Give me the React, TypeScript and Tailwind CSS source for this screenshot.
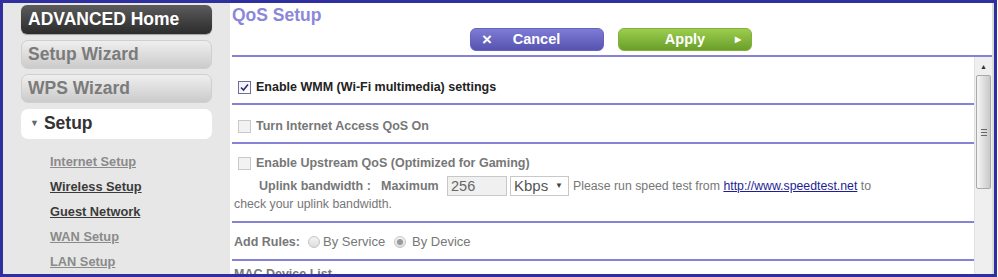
import React from 'react'

const font = { fontFamily: '"Liberation Sans", Arial, Helvetica, sans-serif' }

function CheckBox({ checked }: { checked?: boolean }) {
  if (checked) {
    return (
      <span className="w-[13px] h-[13px] border border-[#6f6f95] bg-gradient-to-br from-[#eef0fa] to-white flex items-center justify-center shrink-0">
        <svg width="9" height="9" viewBox="0 0 9 9">
          <path d="M1 4.5 L3.5 7 L8 1.5" fill="none" stroke="#2b2b7a" strokeWidth="1.6" />
        </svg>
      </span>
    )
  }
  return <span className="w-[13px] h-[13px] border border-[#c9c9c9] bg-[#f2f2f2] shrink-0" />
}

function Radio({ checked }: { checked?: boolean }) {
  return (
    <span className="w-[12px] h-[12px] rounded-full border border-[#c4c4c4] bg-gradient-to-b from-[#f4f4f4] to-[#dedede] flex items-center justify-center shrink-0">
      {checked && <span className="w-[6px] h-[6px] rounded-full bg-[#9a9a9a]" />}
    </span>
  )
}

const Divider = () => <div className="h-[2px] bg-[#8682d6]" />

export default function App() {
  const sub = [
    { label: 'Internet Setup', dark: false },
    { label: 'Wireless Setup', dark: true },
    { label: 'Guest Network', dark: true },
    { label: 'WAN Setup', dark: false },
    { label: 'LAN Setup', dark: false },
  ]

  return (
    <div className="w-[997px] h-[277px] border-[3px] border-[#2f2fa0] flex overflow-hidden bg-white" style={font}>
      {/* Левая колонка */}
      <div className="w-[227px] shrink-0 bg-[#e7e7e7] pt-[2px] pl-[18px]">
        <div className="flex flex-col gap-[5.5px] w-[191px]">
          <div className="h-[29px] rounded-[6px] bg-gradient-to-b from-[#5c5c5c] to-[#2c2c2c] shadow-[0_1px_1px_rgba(0,0,0,0.3)] flex items-center pl-[7px] text-white font-bold text-[17.5px]">
            ADVANCED Home
          </div>
          <div className="h-[29px] rounded-[7px] border border-[#cfcfcf] bg-gradient-to-b from-[#efefef] to-[#cbcbcb] flex items-center pl-[6px] text-[#7b7b7b] font-bold text-[17.5px]">
            Setup Wizard
          </div>
          <div className="h-[29px] rounded-[7px] border border-[#cfcfcf] bg-gradient-to-b from-[#efefef] to-[#cbcbcb] flex items-center pl-[6px] text-[#7b7b7b] font-bold text-[17.5px]">
            WPS Wizard
          </div>
          <div className="h-[30px] rounded-[7px] bg-white flex items-center pl-[9px] text-[#333] font-bold text-[17.5px]">
            <span className="text-[9px] text-[#666] mr-[5px]">▼</span>
            Setup
          </div>
        </div>
        <div className="mt-[10px] pl-[29px] flex flex-col">
          {sub.map(s => (
            <span key={s.label}
              className={`leading-[25px] text-[12.8px] font-bold underline ${s.dark ? 'text-[#3b3b3b]' : 'text-[#8a8a8a]'}`}>
              {s.label}
            </span>
          ))}
        </div>
      </div>

      {/* Основная часть */}
      <div className="flex-1 flex flex-col border-r-2 border-[#dcdcdc] min-w-0">
        <div className="pl-[2px] mt-[2px] leading-[20px] text-[17.5px] font-bold text-[#8b87d9]">QoS Setup</div>
        <div className="flex gap-[14px] pl-[240px] mt-[3px]">
          <button className="w-[134px] h-[23px] rounded-[6px] bg-gradient-to-b from-[#7f7cd6] to-[#5753b0] border border-[#6663bd] flex items-center text-white font-bold text-[14.5px]">
            <span className="ml-[11px] w-[10px] text-[17px] font-black leading-none">×</span>
            <span className="flex-1 text-center pr-[22px]">Cancel</span>
          </button>
          <button className="w-[134px] h-[23px] rounded-[6px] bg-gradient-to-b from-[#9ccd4e] to-[#6b9f2a] border border-[#7fb23a] flex items-center text-white font-bold text-[14.5px]">
            <span className="flex-1 text-center pl-[18px]">Apply</span>
            <span className="w-[10px] mr-[8px] text-[8px]">▶</span>
          </button>
        </div>
        <div className="mt-[4px] ml-[2px] h-[2px] bg-[#8682d6]" />

        <div className="flex flex-1 min-h-0">
          <div className="flex-1 pl-[2px] overflow-hidden text-[#777]">
            <div className="h-[46px] pt-[22px]">
              <div className="h-[16px] flex items-center gap-[5px] pl-[6px]">
                <CheckBox checked />
                <span className="text-[12.5px] font-bold text-[#222]">Enable WMM (Wi-Fi multimedia) settings</span>
              </div>
            </div>
            <Divider />
            <div className="h-[37px] pt-[13px]">
              <div className="flex items-center gap-[5px] pl-[6px] h-[16px]">
                <CheckBox />
                <span className="text-[12.5px] font-bold">Turn Internet Access QoS On</span>
              </div>
            </div>
            <Divider />
            <div className="h-[77px] pt-[11px]">
              <div className="flex items-center gap-[5px] pl-[6px] h-[16px]">
                <CheckBox />
                <span className="text-[12.5px] font-bold">Enable Upstream QoS (Optimized for Gaming)</span>
              </div>
              <div className="flex items-center h-[22px] mt-[4px] pl-[27px] text-[12.3px] whitespace-nowrap">
                <span className="w-[122px] font-bold text-[12.5px]">Uplink bandwidth :</span>
                <span className="w-[66px] font-bold text-[12.5px]">Maximum</span>
                <span className="w-[60px] h-[20px] border border-[#c8c8c8] bg-[#f0f0f0] pl-[3px] text-[14.5px] leading-[18px] text-[#666]">256</span>
                <span className="ml-[3px] w-[59px] h-[20px] border border-[#c8c8c8] bg-white flex items-center pl-[3px] text-[15px] text-[#555]">
                  Kbps
                  <span className="ml-auto mr-[5px] text-[8px] text-[#444]">▼</span>
                </span>
                <span className="ml-[4px]">Please run speed test from <span className="text-[#1e1e96] underline">http://www.speedtest.net</span> to</span>
              </div>
              <div className="text-[12.3px] leading-[14px] pl-[2px]">check your uplink bandwidth.</div>
            </div>
            <Divider />
            <div className="h-[36px] pt-[2px] flex items-center pl-[2px] gap-[3px] text-[13px]">
              <span className="font-bold text-[12.5px] w-[71px]">Add Rules:</span>
              <Radio />
              <span className="w-[68px]">By Service</span>
              <Radio checked />
              <span className="ml-[3px]">By Device</span>
            </div>
            <Divider />
            <div className="pt-[5px] pl-[2px] text-[12.5px] font-bold leading-[16px]">MAC Device List</div>
          </div>

          {/* Полоса прокрутки */}
          <div className="w-[18px] shrink-0 bg-[#efefef] border-l border-[#e2e2e2] flex flex-col items-center">
            <span className="mt-[5px] text-[7px] leading-[10px] text-[#333]">▲</span>
            <div className="mt-[3px] w-[15px] h-[114px] rounded-[2px] border border-[#a9a9a9] bg-gradient-to-r from-[#f6f6f6] to-[#c9c9c9] flex flex-col items-center justify-center gap-[2px]">
              <span className="w-[6px] h-px bg-[#666]" />
              <span className="w-[6px] h-px bg-[#666]" />
              <span className="w-[6px] h-px bg-[#666]" />
            </div>
          </div>
        </div>
      </div>
    </div>
  )
}
